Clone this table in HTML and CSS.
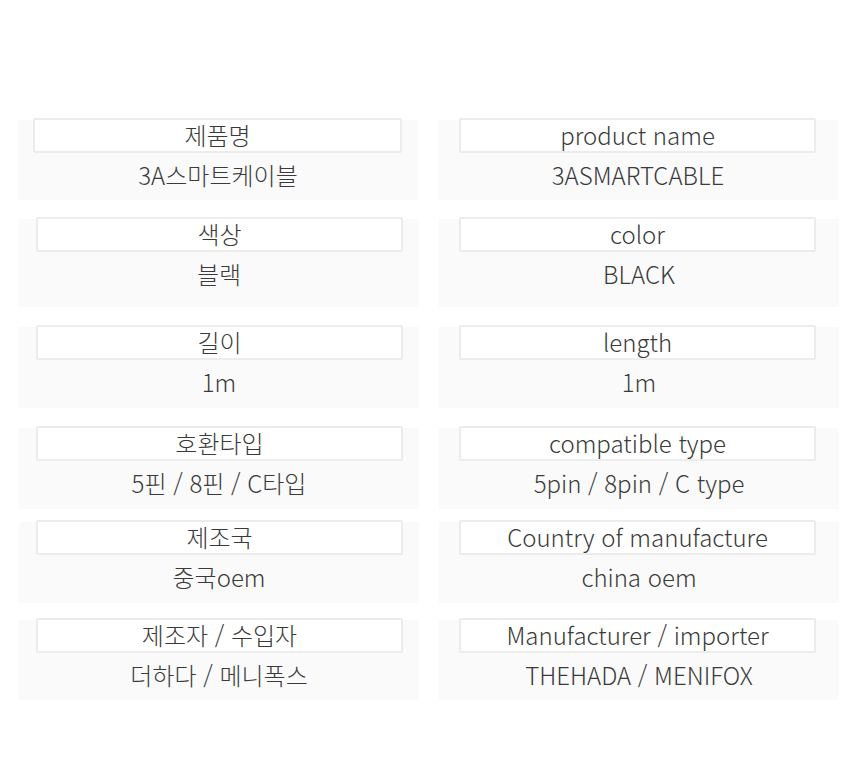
FILE: index.html
```html
<!DOCTYPE html>
<html lang="ko">
<head>
<meta charset="utf-8">
<title>상품 정보</title>
<link rel="stylesheet" href="styles.css">
</head>
<body>
<div class="sheet">
  <div class="row r1">
    <div class="cell left"><div class="label">제품명</div><div class="value">3A스마트케이블</div></div>
    <div class="cell right"><div class="label">product name</div><div class="value">3ASMARTCABLE</div></div>
  </div>
  <div class="row r2 shifted">
    <div class="cell left"><div class="label">색상</div><div class="value">블랙</div></div>
    <div class="cell right"><div class="label">color</div><div class="value">BLACK</div></div>
  </div>
  <div class="row r3 shifted">
    <div class="cell left"><div class="label">길이</div><div class="value">1m</div></div>
    <div class="cell right"><div class="label">length</div><div class="value">1m</div></div>
  </div>
  <div class="row r4 shifted">
    <div class="cell left"><div class="label">호환타입</div><div class="value">5핀 / 8핀 / C타입</div></div>
    <div class="cell right"><div class="label">compatible type</div><div class="value">5pin / 8pin / C type</div></div>
  </div>
  <div class="row r5 shifted">
    <div class="cell left"><div class="label">제조국</div><div class="value">중국oem</div></div>
    <div class="cell right"><div class="label">Country of manufacture</div><div class="value">china oem</div></div>
  </div>
  <div class="row r6 shifted">
    <div class="cell left"><div class="label">제조자 / 수입자</div><div class="value">더하다 / 메니폭스</div></div>
    <div class="cell right"><div class="label">Manufacturer / importer</div><div class="value">THEHADA / MENIFOX</div></div>
  </div>
</div>
</body>
</html>
```
FILE: styles.css
```css
html, body {
  margin: 0;
  padding: 0;
  background: #ffffff;
}

body {
  font-family: "Noto Sans CJK KR", "Noto Sans", sans-serif;
  font-weight: 300;
  color: #3a3a3a;
}

.sheet {
  display: flex;
  flex-direction: column;
  padding: 120px 0 0 18px;
}

.row {
  display: grid;
  grid-template-columns: 400px 400px;
  column-gap: 20px;
}

.row.shifted {
  margin-left: 1px;
}

.cell {
  background: #fafafa;
  display: flex;
  flex-direction: column;
  padding-bottom: 2px;
}

.label {
  height: 29px;
  padding-bottom: 2px;
  margin-top: -2px;
  border: 2px solid #ececec;
  border-radius: 2px;
  background: #ffffff;
  text-align: center;
  font-size: 24px;
  line-height: 29px;
}

.left .label {
  margin-left: 15px;
  margin-right: 16px;
}

.shifted .left .label {
  margin-left: 17px;
  margin-right: 16px;
}

.right .label {
  margin-left: 21px;
  margin-right: 22px;
}

.shifted .right .label {
  margin-left: 20px;
  margin-right: 23px;
}

.value {
  height: 44px;
  padding-bottom: 2px;
  text-align: center;
  font-size: 24px;
  line-height: 44px;
}

.r1 .cell { padding-bottom: 1px; }
.r2 { margin-top: 19px; }
.r2 .cell { padding-bottom: 9px; }
.r3 { margin-top: 20px; }
.r4 { margin-top: 20px; }
.r5 { margin-top: 13px; }
.r6 { margin-top: 17px; }
.r6 .cell { padding-bottom: 1px; }
```
